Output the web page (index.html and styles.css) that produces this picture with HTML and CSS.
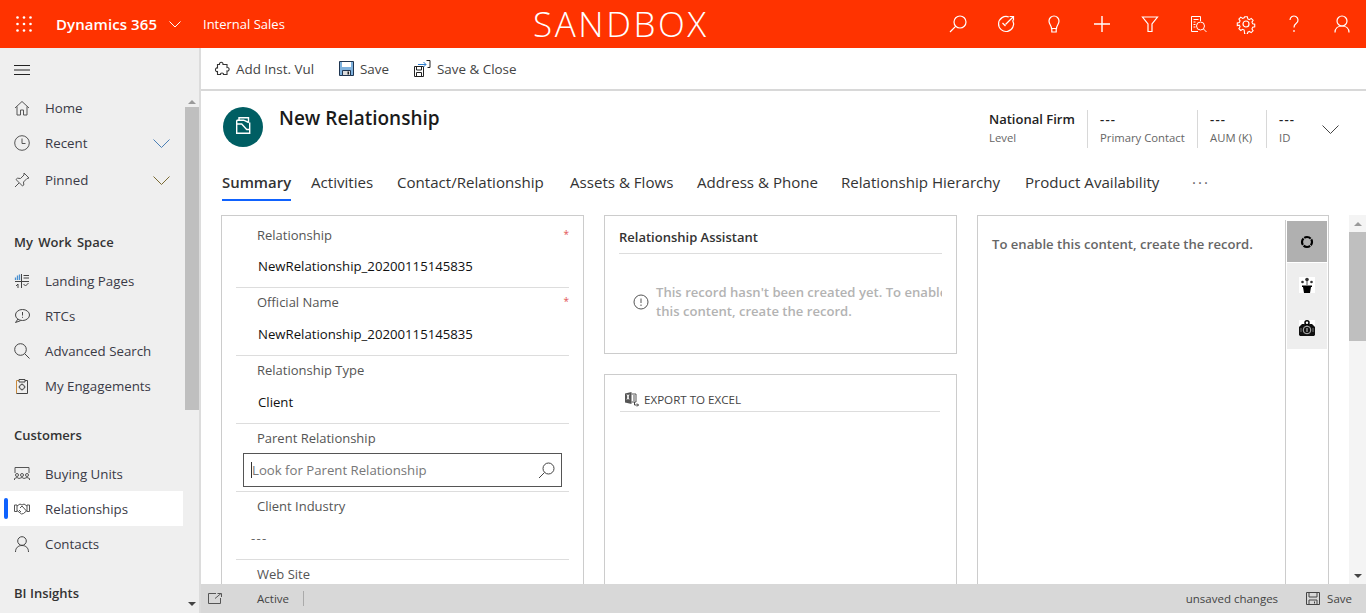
FILE: index.html
```html
<!DOCTYPE html>
<html lang="en">
<head>
<meta charset="utf-8">
<title>New Relationship</title>
<link rel="stylesheet" href="styles.css">
</head>
<body>
<header class="topbar">
  <svg class="waffle" width="16" height="16" viewBox="0 0 16 16" fill="#fff"><circle cx="1.5" cy="1.5" r="1.3"/><circle cx="8" cy="1.5" r="1.3"/><circle cx="14.5" cy="1.5" r="1.3"/><circle cx="1.5" cy="8" r="1.3"/><circle cx="8" cy="8" r="1.3"/><circle cx="14.5" cy="8" r="1.3"/><circle cx="1.5" cy="14.5" r="1.3"/><circle cx="8" cy="14.5" r="1.3"/><circle cx="14.5" cy="14.5" r="1.3"/></svg>
  <span class="brand">Dynamics 365</span>
  <svg class="brand-chev" width="12" height="7" viewBox="0 0 12 7" fill="none" stroke="#fff"><path d="M.5.5l5.500 5.500 5.500-5.500"/></svg>
  <span class="appname">Internal Sales</span>
  <span class="sandbox">SANDBOX</span>
  <nav class="top-icons">
    <svg width="20" height="20" viewBox="0 0 20 20" fill="none" stroke="#fff" stroke-width="1.2"><circle cx="12" cy="8" r="6"/><path d="M7.6 12.4L2 18"/></svg>
    <svg width="20" height="20" viewBox="0 0 20 20" fill="none" stroke="#fff" stroke-width="1.2"><path d="M16.6 6.300A7.500 7.500 0 1 1 12.800 3"/><path d="M9.500 10.500L17.500 2.500M13.500 2.500h4v4"/><path d="M6.500 9l3 3"/></svg>
    <svg width="20" height="20" viewBox="0 0 20 20" fill="none" stroke="#fff" stroke-width="1.2"><path d="M7.500 14.500c0-3-2.500-4-2.500-7.500a5 5 0 0 1 10 0c0 3.500-2.500 4.500-2.500 7.500z"/><path d="M7.800 14.500v3.500h4.400v-3.500"/></svg>
    <svg width="20" height="20" viewBox="0 0 20 20" fill="none" stroke="#fff" stroke-width="1.400"><path d="M10 2v16M2 10h16"/></svg>
    <svg width="20" height="20" viewBox="0 0 20 20" fill="none" stroke="#fff" stroke-width="1.200"><path d="M2.500 3h15L12 10v7.500H8V10z"/></svg>
    <svg width="20" height="20" viewBox="0 0 20 20" fill="none" stroke="#fff" stroke-width="1"><path d="M10 17.500H3.500v-15h9v4.500"/><path d="M5.500 5.500h5M5.500 8h2M5.500 10.500h2M5.500 13h2"/><circle cx="12.500" cy="12" r="4"/><path d="M15.500 15l3 3"/></svg>
    <svg width="20" height="20" viewBox="0 0 20 20" fill="none" stroke="#fff" stroke-width="1.200"><circle cx="10" cy="10" r="3"/><path d="M8.500 2h3l.5 2.300 1.800.8 2-1.300 2.100 2.100-1.300 2 .8 1.800 2.300.5v3l-2.300.5-.8 1.800 1.300 2-2.100 2.100-2-1.300-1.800.8-.5 2.300h-3L8 16.700l-1.800-.8-2 1.300-2.100-2.100 1.300-2-.8-1.800L.3 11.800v-3l2.300-.5.8-1.800-1.300-2 2.100-2.100 2 1.300L8 3z" transform="translate(1 1) scale(.9)"/></svg>
    <svg width="20" height="20" viewBox="0 0 20 20" fill="none" stroke="#fff" stroke-width="1.200"><path d="M6 6a4 4 0 1 1 6.300 3.300C10.800 10.400 10 11.200 10 13.500"/><path d="M10 16v2"/></svg>
    <svg width="20" height="20" viewBox="0 0 20 20" fill="none" stroke="#fff" stroke-width="1.200"><circle cx="10" cy="7" r="5"/><path d="M3 18.500c0-4 3-6.500 7-6.500s7 2.500 7 6.500"/></svg>
  </nav>
</header>
<div class="shell">
  <aside class="sidebar">
    <div class="nav-col">
      <div class="burger"><svg width="16" height="10" viewBox="0 0 16 10" stroke="#222"><path d="M0 .5h16M0 5h16M0 9.500h16"/></svg></div>
      <ul class="nav-list first">
        <li class="nav-item"><svg class="ico" width="16" height="16" viewBox="0 0 16 16" fill="none" stroke="#555"><path d="M1 8l7-6.500L15 8M3 6.500V15h3.500v-5h3v5H13V6.500"/></svg><span>Home</span></li>
        <li class="nav-item tall"><svg class="ico" width="16" height="16" viewBox="0 0 16 16" fill="none" stroke="#555"><circle cx="8" cy="8" r="7.300"/><path d="M8 3.500V8.500h3.500"/></svg><span>Recent</span><svg class="chev" width="17" height="9" viewBox="0 0 17 9" fill="none" stroke="#4a7fb5"><path d="M.5.500l8 8 8-8"/></svg></li>
        <li class="nav-item"><svg class="ico" width="16" height="16" viewBox="0 0 16 16" fill="none" stroke="#555"><path d="M10 1l5 5-2 .5-3.500 3.500.3 3L8.500 14 2 7.500 3.500 6.200l3 .3L10 3zM5 11l-4 4"/></svg><span>Pinned</span><svg class="chev" width="17" height="9" viewBox="0 0 17 9" fill="none" stroke="#7a6a33"><path d="M.5.500l8 8 8-8"/></svg></li>
      </ul>
      <h3 class="nav-head workspace">My Work Space</h3>
      <ul class="nav-list">
        <li class="nav-item"><svg class="ico" width="16" height="16" viewBox="0 0 16 16" fill="none" stroke="#444"><path d="M1 8.500h14M7.500 1v14M9.500 2.500H15M9.500 5H15M2 13l2-2v4M9.500 11l2 2 3-3"/><path d="M1.500 7V4.500M3.500 7V2.500M5.500 7V1.500" stroke="#4a90d0" stroke-width="1.300"/></svg><span>Landing Pages</span></li>
        <li class="nav-item"><svg class="ico" width="16" height="16" viewBox="0 0 16 16" fill="none" stroke="#444"><ellipse cx="8.500" cy="7" rx="7" ry="5.500"/><path d="M4 11l-2.500 3.500 5-1.800M8.500 4v3.500M8.500 8.800v1"/></svg><span>RTCs</span></li>
        <li class="nav-item"><svg class="ico" width="16" height="16" viewBox="0 0 16 16" fill="none" stroke="#444"><circle cx="6.500" cy="6.500" r="5.800"/><path d="M10.700 10.700L15.500 15.500"/></svg><span>Advanced Search</span></li>
        <li class="nav-item"><svg class="ico" width="16" height="16" viewBox="0 0 16 16" fill="none" stroke="#444"><path d="M5 2.500H2.500v13" stroke="#c98a3c"/><path d="M2.500 15.500h11v-13H11M5 4V1.500h6V4z"/><circle cx="8" cy="9" r="2.500"/><path d="M8 5.500v1M8 11.500v1M4.500 9h1M10.500 9h1"/></svg><span>My Engagements</span></li>
      </ul>
      <h3 class="nav-head customers">Customers</h3>
      <ul class="nav-list">
        <li class="nav-item"><svg class="ico" width="16" height="16" viewBox="0 0 16 16" fill="none" stroke="#555"><path d="M1 7V1.500h14V7"/><circle cx="3" cy="9" r="1.500"/><circle cx="8" cy="9" r="1.500"/><circle cx="13" cy="9" r="1.500"/><path d="M.5 14v-1.500l2.500-1 2 1 3-1 2 1 3-1 2.500 1V14"/></svg><span>Buying Units</span></li>
        <li class="nav-item active"><svg class="ico" width="16" height="16" viewBox="0 0 16 16" fill="none" stroke="#555"><path d="M.5 4h2.500v6.500H.5zM13 4h2.500v6.500H13zM3 5l3-2 2 1 2-1 3 2M3 9.500l4.500 3.500 2-.5 3.500-3M6 7l2-2 4.500 5M5 9l2 2"/></svg><span>Relationships</span></li>
        <li class="nav-item"><svg class="ico" width="16" height="16" viewBox="0 0 16 16" fill="none" stroke="#444"><circle cx="8" cy="5" r="4.300"/><path d="M1.500 16c0-4 2.500-6.500 6.500-6.500s6.500 2.500 6.500 6.500"/></svg><span>Contacts</span></li>
      </ul>
      <h3 class="nav-head insights">BI Insights</h3>
    </div>
    <div class="nav-scroll">
      <span class="arrow up"></span>
      <span class="thumb"></span>
      <span class="arrow down"></span>
    </div>
  </aside>
  <main class="main">
    <div class="commandbar">
      <button class="cmd c1"><svg width="16" height="16" viewBox="0 0 16 16" fill="none" stroke="#333" stroke-width="1.100"><path d="M5.500 3.500C5 .5 9.500.5 9 3.500h4v3c2.800-.5 2.800 4 0 3.500v3.500H9.500c.5-2-3.500-2-3 0H3.500V10.500C.8 11.500.8 6 3.500 7V3.500z"/></svg>Add Inst. Vul</button>
      <button class="cmd c2"><svg width="15" height="15" viewBox="0 0 15 15"><path d="M.5.500h14v14H.5z" fill="#7fb2de" stroke="#1f3550"/><path d="M3 1h9v5H3z" fill="#fff"/><path d="M3.500 14.500v-5h8v5z" fill="#ddd" stroke="#1f3550"/><path d="M8.500 10.500h1.500v3H8.500z" fill="#222"/></svg>Save</button>
      <button class="cmd c3"><svg width="17" height="17" viewBox="0 0 17 17" fill="none" stroke="#222"><path d="M.5 6.500h9v10h-9z" fill="#fff"/><path d="M2.500 6.500v3.500h5V6.500M2.500 16.500v-4h5v4"/><path d="M12.500.5h3.500v7h-2.500"/><path d="M4 4.500h8M9.500 2l2.500 2.500-2.500 2.500" stroke="#2f7fd0"/></svg>Save &amp; Close</button>
    </div>
    <section class="record-head">
      <div class="avatar"><svg width="20" height="20" viewBox="0 0 20 20" fill="none" stroke="#fff" stroke-width="1.400"><path d="M6 3.500V.8h9.500v5"/><path d="M3.700 3.200v13h13V5.500"/><path d="M3.700 3.200h7l5 2.300"/><path d="M3.700 7h5l5 5.500h3"/></svg></div>
      <h1 class="title">New Relationship</h1>
      <div class="summary-fields">
        <div class="sf sf1"><b>National Firm</b><small>Level</small></div>
        <div class="sf sf2"><em>---</em><small>Primary Contact</small></div>
        <div class="sf sf3"><em>---</em><small>AUM (K)</small></div>
        <div class="sf sf4"><em>---</em><small>ID</small></div>
      </div>
      <svg class="head-chev" width="17" height="9" viewBox="0 0 17 9" fill="none" stroke="#444"><path d="M.5.500l8 8 8-8"/></svg>
    </section>
    <div class="tabs">
      <span class="tab on">Summary</span>
      <span class="tab">Activities</span>
      <span class="tab">Contact/Relationship</span>
      <span class="tab">Assets &amp; Flows</span>
      <span class="tab">Address &amp; Phone</span>
      <span class="tab">Relationship Hierarchy</span>
      <span class="tab">Product Availability</span>
      <span class="tab dots">···</span>
    </div>
    <div class="canvas">
      <div class="columns">
        <section class="panel form">
          <div class="field"><label>Relationship<i>*</i></label><div class="val">NewRelationship_20200115145835</div></div>
          <div class="field"><label>Official Name<i>*</i></label><div class="val">NewRelationship_20200115145835</div></div>
          <div class="field"><label>Relationship Type</label><div class="val">Client</div></div>
          <div class="field"><label>Parent Relationship</label>
            <div class="lookup"><span class="caret"></span><span>Look for Parent Relationship</span><svg width="17" height="17" viewBox="0 0 17 17" fill="none" stroke="#444"><circle cx="10.500" cy="6.500" r="5.500"/><path d="M6.500 10.500L1 16"/></svg></div>
          </div>
          <div class="field"><label>Client Industry</label><div class="val empty">---</div></div>
          <div class="field"><label>Web Site</label></div>
        </section>
        <div class="mid">
          <section class="panel assistant">
            <h2>Relationship Assistant</h2>
            <div class="notice">
              <svg width="16" height="16" viewBox="0 0 16 16" fill="none" stroke="#555"><circle cx="8" cy="8" r="7"/><path d="M8 4.500v4.500M8 10.500v1.500"/></svg>
              <p>This record hasn't been created yet. To enable<br>this content, create the record.</p>
            </div>
          </section>
          <section class="panel export">
            <div class="export-bar"><svg width="16" height="16" viewBox="0 0 16 16"><path d="M1 2.500l6.500-1.500v12L1 11.500z" fill="#555"/><path d="M7.500 3h4.500v8H7.500M9 5h2M9 7h2M9 9h2" fill="none" stroke="#555"/><path d="M3 3.500l2 5M5 3.500l-2 5" stroke="#fff" fill="none"/><path d="M10.500 11v3h4M13 12.500l1.500 1.500-1.500 1.500" fill="none" stroke="#444"/></svg>EXPORT TO EXCEL</div>
          </section>
        </div>
        <section class="panel side">
          <p class="side-text">To enable this content, create the record.</p>
          <div class="rail">
            <span class="rail-btn sel"><svg width="14" height="14" viewBox="0 0 14 14" fill="none" stroke="#000" stroke-width="2.200"><circle cx="7" cy="7" r="5" stroke-dasharray="6.950 .9" stroke-dashoffset="3.500"/></svg></span>
            <span class="rail-btn"><svg width="16" height="16" viewBox="0 0 16 16"><rect width="16" height="16" fill="#fff"/><path d="M3 8.500h10v1.500h-1l-1 6H5L4 10H3z" fill="#000"/><circle cx="8" cy="2.500" r="1.800" fill="#333"/><circle cx="3.500" cy="5" r="1.300" fill="#333"/><circle cx="12.500" cy="5" r="1.300" fill="#333"/><path d="M8 4v4" stroke="#555"/></svg></span>
            <span class="rail-btn"><svg width="16" height="16" viewBox="0 0 16 16"><rect width="16" height="16" fill="#fff"/><circle cx="8" cy="2.800" r="2" fill="none" stroke="#000" stroke-width="1.500"/><path d="M1 6l2-2h2.500L8 5.500 10.500 4H13l2 2 1 1v8l-1 1H1l-1-1V7z" fill="#111"/><circle cx="8" cy="10" r="3.800" fill="none" stroke="#bbb"/><path d="M8 8v4" stroke="#ccc"/><path d="M2 8v4M14 8v4" stroke="#777"/></svg></span>
          </div>
        </section>
      </div>
      <div class="page-scroll">
        <span class="arrow up"></span>
        <span class="thumb"></span>
        <span class="arrow down"></span>
      </div>
    </div>
    <footer class="status">
      <svg width="14" height="11" viewBox="0 0 14 11" fill="none" stroke="#555"><path d="M8 .500H.500v10h12V5M7 5.500L13 .500M9.500.500H13.500V4"/></svg>
      <span class="st-active">Active</span>
      <span class="st-sep"></span>
      <span class="st-unsaved">unsaved changes</span>
      <svg class="st-save-ico" width="14" height="13" viewBox="0 0 14 13" fill="none" stroke="#444"><path d="M.500.500h13v12H.500zM3 .500v4.500h8V.500M3 12.500V8h8v4.500M8.500 9.500v2"/></svg>
      <span class="st-save">Save</span>
    </footer>
  </main>
</div>
</body>
</html>
```
FILE: styles.css
```css
* { box-sizing: border-box; }
html, body { margin: 0; height: 613px; overflow: hidden; }
body { font-family: "Open Sans", "Noto Sans", sans-serif; font-size: 13px; color: #333; background: #fff; }
ul { list-style: none; margin: 0; padding: 0; }
svg { display: block; flex: none; }

.topbar { height: 48px; background: #ff3300; color: #fff; display: flex; align-items: center; position: relative; padding-left: 16px; }
.brand { font-size: 15px; font-weight: 600; margin-left: 24px; width: 113px; white-space: nowrap; letter-spacing: .08px; }
.appname { font-size: 13px; margin-left: 22px; white-space: nowrap; }
.sandbox { position: absolute; left: 533px; top: 0; font-size: 35px; line-height: 48px; font-weight: 300; letter-spacing: 2.6px; }
.top-icons { margin-left: auto; display: flex; gap: 28px; padding-right: 14px; }

.shell { display: flex; height: 565px; }
.sidebar { width: 201px; flex: none; background: #efefef; border-right: 2px solid #dcdcdc; display: flex; }
.nav-col { width: 183px; flex: none; overflow: hidden; }
.burger { height: 42px; padding: 17px 0 0 14px; }
.nav-item { height: 35px; display: flex; align-items: center; padding-left: 14px; position: relative; font-size: 13.3px; color: #3a3a46; white-space: nowrap; }
.nav-item .ico { margin-right: 15px; }
.nav-item.tall { height: 36px; margin-bottom: 1px; }
.nav-item .chev { position: absolute; right: 13px; top: 14px; }
.nav-item.active { background: #fff; }
.nav-item.active::before { content: ""; position: absolute; left: 4px; top: 7px; width: 4px; height: 21px; border-radius: 2px; background: #0f62fe; }
.nav-head { margin: 0; font-size: 13px; font-weight: 600; color: #333; padding-left: 14px; height: 18px; line-height: 18px; }
.workspace { margin-top: 36px; margin-bottom: 12px; word-spacing: 2px; }
.customers { margin-top: 23px; margin-bottom: 12px; }
.insights { margin-top: 23px; }

.nav-scroll { width: 14px; flex: none; margin-left: 2px; display: flex; flex-direction: column; align-items: stretch; }
.nav-scroll .arrow.up { margin-top: 48px; }
.arrow { height: 11px; display: flex; justify-content: center; align-items: center; flex: none; }
.arrow::after { content: ""; border-left: 4px solid transparent; border-right: 4px solid transparent; }
.arrow.up::after { border-bottom: 4px solid #9a9a9a; }
.arrow.down::after { border-top: 4px solid #444; }
.arrow.down { margin-top: auto; margin-bottom: 4px; }
.nav-scroll .thumb { height: 303px; background: #bfbfbf; }

.main { flex: 1; min-width: 0; display: flex; flex-direction: column; position: relative; }
.commandbar { height: 43px; flex: none; border-bottom: 2px solid #d8d8d8; display: flex; align-items: center; }
.cmd { border: 0; background: none; padding: 0; font: inherit; font-size: 13.400px; color: #444; display: flex; align-items: center; gap: 6px; white-space: nowrap; height: 40px; }
.c1 { margin-left: 13px; width: 125px; }
.c2 { width: 75px; }
.c3 { width: 120px; }

.record-head { height: 73px; flex: none; position: relative; display: flex; }
.avatar { width: 40px; height: 40px; border-radius: 50%; background: #005e63; margin: 16px 0 0 22px; display: flex; align-items: center; justify-content: center; }
.title { margin: 11px 0 0 16px; font-size: 19px; line-height: 32px; font-weight: 600; color: #1a1a1a; }
.summary-fields { position: absolute; left: 776px; top: 19px; display: flex; height: 38px; }
.sf { display: flex; flex-direction: column; padding-left: 12px; border-left: 1px solid #d8d8d8; }
.sf1 { border-left: 0; width: 110px; }
.sf2 { width: 110px; }
.sf3 { width: 69px; }
.sf4 { width: 40px; }
.sf b { font-size: 13px; font-weight: 600; line-height: 18px; color: #222; white-space: nowrap; }
.sf em { font-style: normal; font-size: 13px; line-height: 18px; color: #222; font-weight: 600; letter-spacing: 1.200px; }
.sf small { font-size: 11.300px; line-height: 20px; color: #666; white-space: nowrap; }
.head-chev { position: absolute; left: 1121px; top: 34px; }

.tabs { height: 38px; flex: none; display: grid; grid-template-columns: 89px 86px 173px 127px 144px 184px 167px auto; padding-left: 21px; justify-content: start; align-items: start; font-size: 15.100px; color: #333; }
.tab { height: 37px; line-height: 37px; white-space: nowrap; }
.tab.on { font-weight: 600; font-size: 14.900px; justify-self: start; border-bottom: 2px solid #0f62fe; width: 69px; }
.tab.dots { color: #666; letter-spacing: 2px; }

.canvas { flex: 1; min-height: 0; display: flex; padding: 13px 0 0 20px; overflow: hidden; }
.columns { display: grid; grid-template-columns: 363px 353px 352px; column-gap: 20px; width: 1108px; flex: none; height: 420px; }
.panel { border: 1px solid #ccc; background: #fff; }
.form { padding: 4px 14px 0; height: 420px; overflow: hidden; }
.field { height: 68px; border-bottom: 1px solid #ddd; }
.field label { display: flex; justify-content: space-between; padding: 4px 0 0 21px; height: 32px; line-height: 20px; color: #555; }
.field:first-child label { padding-top: 5px; }
.field label i { color: #e25555; font-style: normal; font-size: 10px; margin-top: -1px; }
.val { font-weight: 500; color: #111; padding-left: 22px; height: 30px; line-height: 28px; white-space: nowrap; font-size: 13.200px; }
.val.empty { font-weight: 400; padding-left: 15px; color: #666; letter-spacing: 1.200px; }
.lookup { height: 34px; margin: -3px 7px 0 7px; border: 1px solid #555; display: flex; align-items: center; padding: 0 6px 0 7px; color: #777; font-size: 13.200px; }
.lookup svg { margin-left: auto; }
.caret { width: 1px; height: 16px; background: #333; flex: none; }

.mid { display: flex; flex-direction: column; gap: 20px; }
.assistant { height: 139px; padding: 0 14px; }
.assistant h2 { margin: 0; font-size: 13px; font-weight: 600; height: 38px; line-height: 42px; border-bottom: 1px solid #ddd; color: #333; }
.notice { display: flex; align-items: center; gap: 7px; padding: 29px 0 0 14px; overflow: hidden; }
.notice p { margin: 0; font-weight: 600; font-size: 13.100px; line-height: 19px; color: #b3b3b3; white-space: nowrap; }
.export { flex: 1; padding: 0 14px; }
.export-bar { display: flex; align-items: center; gap: 4px; height: 37px; margin: 0 2px 0 1px; padding: 12px 0 0 4px; font-size: 11.600px; color: #444; border-bottom: 1px solid #ddd; }

.side { display: flex; }
.side-text { margin: 0; flex: 1; padding: 19px 0 0 14px; font-weight: 600; font-size: 13.100px; color: #666; white-space: nowrap; }
.rail { width: 43px; flex: none; border-left: 1px solid #ccc; padding: 1px 0 0 1px; margin-top: 4px; display: flex; flex-direction: column; }
.rail-btn { height: 43px; width: 40px; background: #eee; display: flex; align-items: center; justify-content: center; }
.rail-btn.sel { height: 41px; background: #b0b0b0; margin-bottom: 1px; }

.page-scroll { width: 17px; margin-left: 20px; flex: none; height: 369px; background: #f4f4f4; display: flex; flex-direction: column; }
.page-scroll .arrow { height: 17px; }
.page-scroll .thumb { height: 109px; background: #bfbfbf; }
.page-scroll .arrow.down { margin-bottom: 0; }

.status { height: 29px; background: #d8d8d8; display: flex; align-items: center; padding-left: 7px; position: absolute; left: 0; right: 0; bottom: 0; font-size: 11.500px; color: #444; }
.st-active { margin-left: 35px; }
.st-sep { width: 1px; height: 15px; background: #aaa; margin-left: 14px; }
.st-unsaved { margin-left: auto; }
.st-save-ico { margin-left: 28px; }
.st-save { margin: 0 14px 0 7px; }
```
